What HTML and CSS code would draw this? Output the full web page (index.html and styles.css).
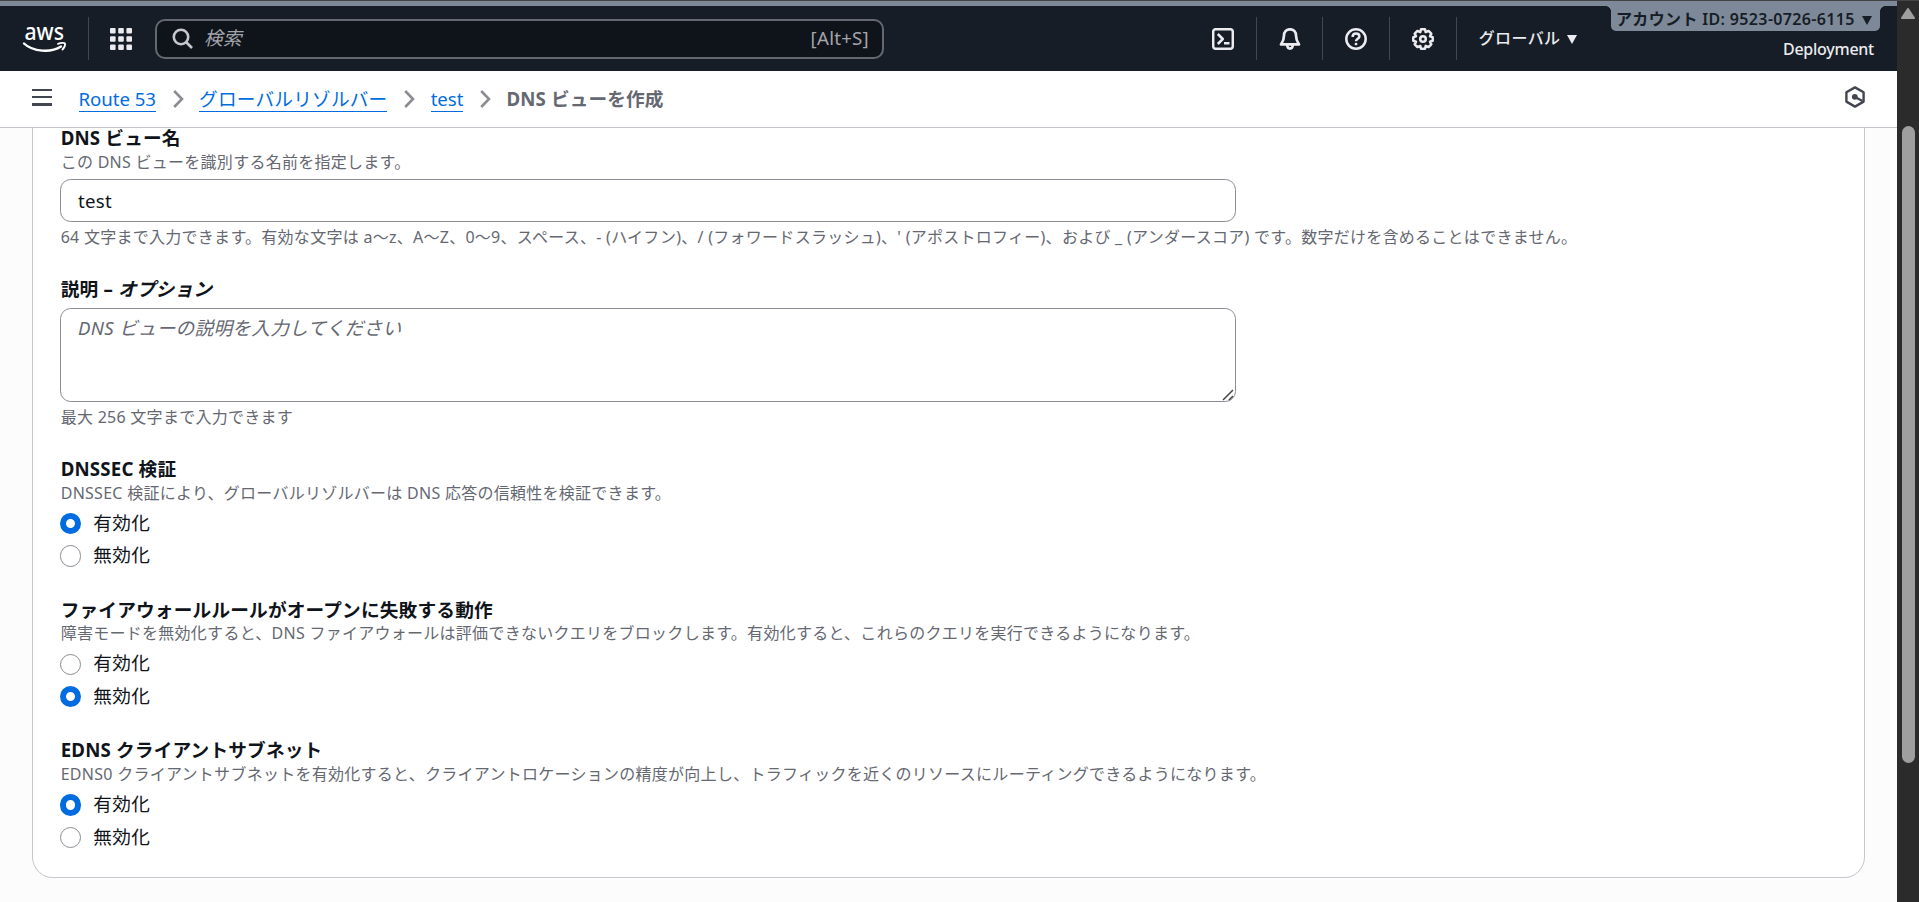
FILE: index.html
```html
<!DOCTYPE html>
<html lang="ja">
<head>
    <meta charset="UTF-8">
    <meta name="viewport" content="width=device-width, initial-scale=1.0">
    <title>DNS ビューを作成 | Route 53</title>
    <link rel="stylesheet" href="styles.css">
</head>
<body>

<div class="app">
    <header class="topnav">
        <svg class="logo" width="44" height="32" viewBox="0 0 44 32">
            <text class="logo-text" x="1.5" y="16.5" textLength="39.5" lengthAdjust="spacingAndGlyphs">aws</text>
            <path d="M1 20.5 C10 29 28 30 38 23.5" fill="none" stroke="#fff" stroke-width="2.4" stroke-linecap="round"/>
            <path d="M35 20.8 C38 19.6 41.5 19.6 42 20.4 C42.3 22 41 25 39.5 26.5" fill="none" stroke="#fff" stroke-width="1.8" stroke-linecap="round"/>
        </svg>
        <span class="sep"></span>
        <svg class="services" width="22" height="22" viewBox="0 0 22 22" fill="#ebebf0">
            <rect x="0" y="0" width="5.6" height="5.6" rx="1"/><rect x="8.2" y="0" width="5.6" height="5.6" rx="1"/><rect x="16.4" y="0" width="5.6" height="5.6" rx="1"/>
            <rect x="0" y="8.2" width="5.6" height="5.6" rx="1"/><rect x="8.2" y="8.2" width="5.6" height="5.6" rx="1"/><rect x="16.4" y="8.2" width="5.6" height="5.6" rx="1"/>
            <rect x="0" y="16.4" width="5.6" height="5.6" rx="1"/><rect x="8.2" y="16.4" width="5.6" height="5.6" rx="1"/><rect x="16.4" y="16.4" width="5.6" height="5.6" rx="1"/>
        </svg>
        <div class="search">
            <svg width="22" height="22" viewBox="0 0 22 22" fill="none" stroke="#c6c6cd" stroke-width="2.6">
                <circle cx="9" cy="9" r="7.2"/><path d="M14 14 L20 20"/>
            </svg>
            <span class="search-placeholder">検索</span>
            <span class="search-key">[Alt+S]</span>
        </div>
        <nav class="tools">
            <span class="tool">
                <svg width="22" height="22" viewBox="0 0 22 22" fill="none" stroke="#ebebf0" stroke-width="2.5" stroke-linejoin="round">
                    <rect x="1.2" y="1.2" width="19.6" height="19.6" rx="2.5"/><path d="M5.8 6 L10.8 11 L5.8 16 M12 15.2 H17.5"/>
                </svg>
            </span>
            <span class="tool">
                <svg width="22" height="22" viewBox="0 0 22 22" fill="none" stroke="#ebebf0" stroke-width="2.7" stroke-linejoin="round">
                    <path d="M11 1.3 C7 1.3 5 4 5 7.4 C5 12 3.6 14 2 16.4 H20 C18.4 14 17 12 17 7.4 C17 4 15 1.3 11 1.3 Z"/><path d="M8.2 17 C8.4 19.6 9.3 20.6 11 20.6 C12.7 20.6 13.6 19.6 13.8 17"/>
                </svg>
            </span>
            <span class="tool">
                <svg width="22" height="22" viewBox="0 0 22 22" fill="none" stroke="#ebebf0" stroke-width="2.5">
                    <circle cx="11" cy="11" r="9.7"/><path d="M7.6 9 C7.6 6.8 9 5.5 11 5.5 C13 5.5 14.4 6.7 14.4 8.4 C14.4 10.8 11 10.8 11 13.2"/><path d="M11 14.9 V17.2"/>
                </svg>
            </span>
            <span class="tool">
                <svg width="22" height="22" viewBox="0 0 22 22" fill="none" stroke="#ebebf0" stroke-width="2.5" stroke-linejoin="round">
                    <path d="M9 1.3 H13 L13.7 4.1 L16.6 2.9 L19.3 5.6 L18 8.4 L20.7 9.3 V12.7 L18 13.6 L19.3 16.4 L16.6 19.1 L13.7 17.9 L13 20.7 H9 L8.3 17.9 L5.4 19.1 L2.7 16.4 L4 13.6 L1.3 12.7 V9.3 L4 8.4 L2.7 5.6 L5.4 2.9 L8.3 4.1 Z"/><circle cx="11" cy="11" r="2.8"/>
                </svg>
            </span>
        </nav>
        <div class="region">グローバル<i class="caret"></i></div>
        <div class="account">
            <div class="account-id">アカウント ID: 9523-0726-6115<i class="caret"></i></div>
            <div class="account-name">Deployment</div>
        </div>
    </header>

    <div class="crumb-bar">
        <span class="menu"><i></i><i></i><i></i></span>
        <a class="crumb">Route 53</a>
        <svg class="chevron" width="11" height="18" viewBox="0 0 11 18"><path d="M1.2 1 L9 9 L1.2 17"/></svg>
        <a class="crumb crumb-ja">グローバルリゾルバー</a>
        <svg class="chevron" width="11" height="18" viewBox="0 0 11 18"><path d="M1.2 1 L9 9 L1.2 17"/></svg>
        <a class="crumb">test</a>
        <svg class="chevron" width="11" height="18" viewBox="0 0 11 18"><path d="M1.2 1 L9 9 L1.2 17"/></svg>
        <span class="crumb-current">DNS ビューを作成</span>
        <svg class="hex" width="20" height="22" viewBox="0 0 20 22" fill="none" stroke="#424650" stroke-width="2.4" stroke-linejoin="round">
            <path d="M18.6 15.6 L10 20.6 L1.4 15.6 V6.2 L10 1.4 L18.6 6.2 Z"/><path d="M10 11 L17.5 15"/><circle cx="9.8" cy="10.8" r="2.9" fill="#424650" stroke="none"/>
        </svg>
    </div>

    <main class="content">
        <section class="card">
            <div class="field">
                <div class="label">DNS ビュー名</div>
                <div class="desc">この DNS ビューを識別する名前を指定します。</div>
                <input class="input" type="text" value="test">
                <div class="hint">64 文字まで入力できます。有効な文字は a～z、A～Z、0～9、スペース、- (ハイフン)、/ (フォワードスラッシュ)、' (アポストロフィー)、および _ (アンダースコア) です。数字だけを含めることはできません。</div>
            </div>

            <div class="field">
                <div class="label">説明 – <em>オプション</em></div>
                <div class="textarea-wrap">
                    <textarea class="input textarea" placeholder="DNS ビューの説明を入力してください"></textarea>
                    <svg class="grip" width="12" height="12" viewBox="0 0 12 12" stroke="#444" stroke-width="1.5"><path d="M1 11 L11 1 M7 11 L11 7"/></svg>
                </div>
                <div class="hint">最大 256 文字まで入力できます</div>
            </div>

            <div class="field radios">
                <div class="label">DNSSEC 検証</div>
                <div class="desc">DNSSEC 検証により、グローバルリゾルバーは DNS 応答の信頼性を検証できます。</div>
                <label class="option"><input class="radio" type="radio" name="dnssec" checked>有効化</label>
                <label class="option"><input class="radio" type="radio" name="dnssec">無効化</label>
            </div>

            <div class="field radios">
                <div class="label">ファイアウォールルールがオープンに失敗する動作</div>
                <div class="desc">障害モードを無効化すると、DNS ファイアウォールは評価できないクエリをブロックします。有効化すると、これらのクエリを実行できるようになります。</div>
                <label class="option"><input class="radio" type="radio" name="failopen">有効化</label>
                <label class="option"><input class="radio" type="radio" name="failopen" checked>無効化</label>
            </div>

            <div class="field radios">
                <div class="label">EDNS クライアントサブネット</div>
                <div class="desc">EDNS0 クライアントサブネットを有効化すると、クライアントロケーションの精度が向上し、トラフィックを近くのリソースにルーティングできるようになります。</div>
                <label class="option"><input class="radio" type="radio" name="edns" checked>有効化</label>
                <label class="option"><input class="radio" type="radio" name="edns">無効化</label>
            </div>
        </section>
    </main>
</div>

<div class="scrollbar">
    <svg width="14" height="11" viewBox="0 0 14 11"><path d="M7 1 L13 10 H1 Z" fill="#9f9f9f" stroke="#9f9f9f" stroke-width="2" stroke-linejoin="round"/></svg>
    <div class="thumb"></div>
</div>

</body>
</html>
```

FILE: styles.css
```css
* {
    box-sizing: border-box;
}
body {
    margin: 0;
    height: 902px;
    display: flex;
    overflow: hidden;
    border-top: 1px solid #444;
    background-color: #fcfcfd;
    color: #0f141a;
    font-family: "Noto Sans", "Noto Sans CJK JP", sans-serif;
    font-size: 18.67px;
    line-height: 26.67px;
    letter-spacing: 0.25px;
}
svg {
    display: block;
    flex: none;
}
.app {
    width: 1897px;
    display: flex;
    flex-direction: column;
}

/* top navigation */
.topnav {
    flex: none;
    height: 70px;
    display: flex;
    align-items: center;
    padding-left: 23px;
    border-top: 5px solid #7d8998;
    background-color: #161d26;
    color: #ebebf0;
}
.logo {
    overflow: visible;
}
.logo-text {
    fill: #fff;
    font-size: 23px;
    font-weight: 500;
    letter-spacing: 0;
}
.sep {
    width: 1px;
    height: 43px;
    margin: 0 21px;
    background-color: #424650;
}
.search {
    width: 729px;
    height: 40px;
    margin-left: 23px;
    padding: 0 13px 0 15px;
    display: flex;
    align-items: center;
    border: 2px solid #656871;
    border-radius: 10px;
    background-color: #0f141a;
    color: #a4a4ad;
}
.search-placeholder {
    margin-left: 10px;
    font-style: italic;
}
.search-key {
    margin-left: auto;
}
.tools {
    display: flex;
    margin-left: 306px;
}
.tool {
    width: 66.7px;
    height: 43px;
    display: flex;
    align-items: center;
    justify-content: center;
    border-right: 1px solid #424650;
}
.caret {
    display: inline-block;
    border: 5.5px solid transparent;
    border-top: 9px solid currentColor;
    border-bottom: 0;
    margin-left: 7px;
}
.region {
    margin-left: 22px;
    font-size: 16px;
    font-weight: 500;
    letter-spacing: 0.35px;
}
.account {
    align-self: flex-start;
    margin-left: auto;
    margin-right: 17px;
    text-align: right;
    font-size: 16px;
}
.account-id {
    position: relative;
    width: 269px;
    height: 25px;
    padding-left: 5px;
    text-align: left;
    line-height: 26px;
    white-space: nowrap;
    border-radius: 0 0 5px 5px;
    background-color: #7d8998;
    color: #161d26;
    font-weight: 600;
    letter-spacing: 0.35px;
}
/* concave corners where the tab meets the strip */
.account-id::before,
.account-id::after {
    content: "";
    position: absolute;
    top: 0;
    width: 5px;
    height: 5px;
}
.account-id::before {
    left: -5px;
    background: radial-gradient(circle at 0 100%, transparent 4.5px, #7d8998 5px);
}
.account-id::after {
    right: -5px;
    background: radial-gradient(circle at 100% 100%, transparent 4.5px, #7d8998 5px);
}
.account-name {
    padding: 5px 6px 0 0;
    font-weight: 500;
    letter-spacing: -0.25px;
}

/* breadcrumbs */
.crumb-bar {
    flex: none;
    height: 57px;
    display: flex;
    align-items: center;
    padding: 0 32px;
    border-bottom: 1px solid #c6c6cd;
    background-color: #fff;
}
.menu {
    width: 20px;
    height: 17px;
    margin-right: 26.5px;
    margin-bottom: 4px;
    display: flex;
    flex-direction: column;
    justify-content: space-between;
}
.menu i {
    height: 2.6px;
    background-color: #424650;
}
.crumb {
    height: 26px;
    line-height: 26px;
    border-bottom: 1px solid #006ce0;
    color: #006ce0;
    letter-spacing: -0.06px;
}
.crumb-ja {
    letter-spacing: 0.2px;
}
.chevron {
    margin: 0 15.5px 0 16.7px;
    fill: none;
    stroke: #8c8c94;
    stroke-width: 2.6;
}
.crumb-current {
    color: #656871;
    font-weight: 700;
    letter-spacing: 0.1px;
}
.hex {
    margin-left: auto;
    margin-bottom: 4px;
}

/* form */
.content {
    flex: 1;
    overflow: hidden;
    padding: 0 32px;
}
.card {
    height: 752.7px;
    margin-top: -2.7px;
    padding-left: 27px;
    border: 1px solid #c6c6cd;
    border-top: 0;
    border-radius: 0 0 21px 21px;
    background-color: #fff;
}
.field {
    margin-bottom: 27.4px;
}
.field:first-child {
    margin-bottom: 28.3px;
}
.label,
.desc,
.hint {
    padding-left: 0.7px;
}
.label {
    font-weight: 700;
    letter-spacing: 0.18px;
}
.desc,
.hint {
    color: #656871;
    font-size: 16px;
    line-height: 21.33px;
    letter-spacing: 0.27px;
    white-space: nowrap;
}
.hint {
    margin-top: 5px;
}
.input {
    display: block;
    width: 1176px;
    height: 43px;
    margin-top: 5.33px;
    padding: 5px 17px;
    border: 1px solid #8c8c94;
    border-radius: 10.67px;
    background-color: #fff;
    color: #0f141a;
    font: inherit;
    letter-spacing: inherit;
}
.textarea-wrap {
    position: relative;
    width: 1176px;
}
.textarea {
    height: 94px;
    padding-top: 6px;
    resize: none;
}
.textarea::placeholder {
    color: #656871;
    font-style: italic;
}
.grip {
    position: absolute;
    right: 2px;
    bottom: 1px;
}
.radios {
    margin-bottom: 27.8px;
}
.option {
    display: flex;
    align-items: center;
    height: 26.67px;
    margin-top: 5.8px;
}
.radio {
    appearance: none;
    width: 21.33px;
    height: 21.33px;
    margin: 1px 12px 0 0;
    border: 1.33px solid #8c8c94;
    border-radius: 50%;
    background-color: #fff;
}
.radio:checked {
    border: 6.5px solid #006ce0;
}

/* page scrollbar */
.scrollbar {
    width: 22px;
    padding-top: 7px;
    display: flex;
    flex-direction: column;
    align-items: center;
    background-color: #2b2b2b;
}
.thumb {
    width: 13px;
    height: 637px;
    margin-top: 107px;
    border-radius: 7px;
    background-color: #9f9f9f;
}
```
